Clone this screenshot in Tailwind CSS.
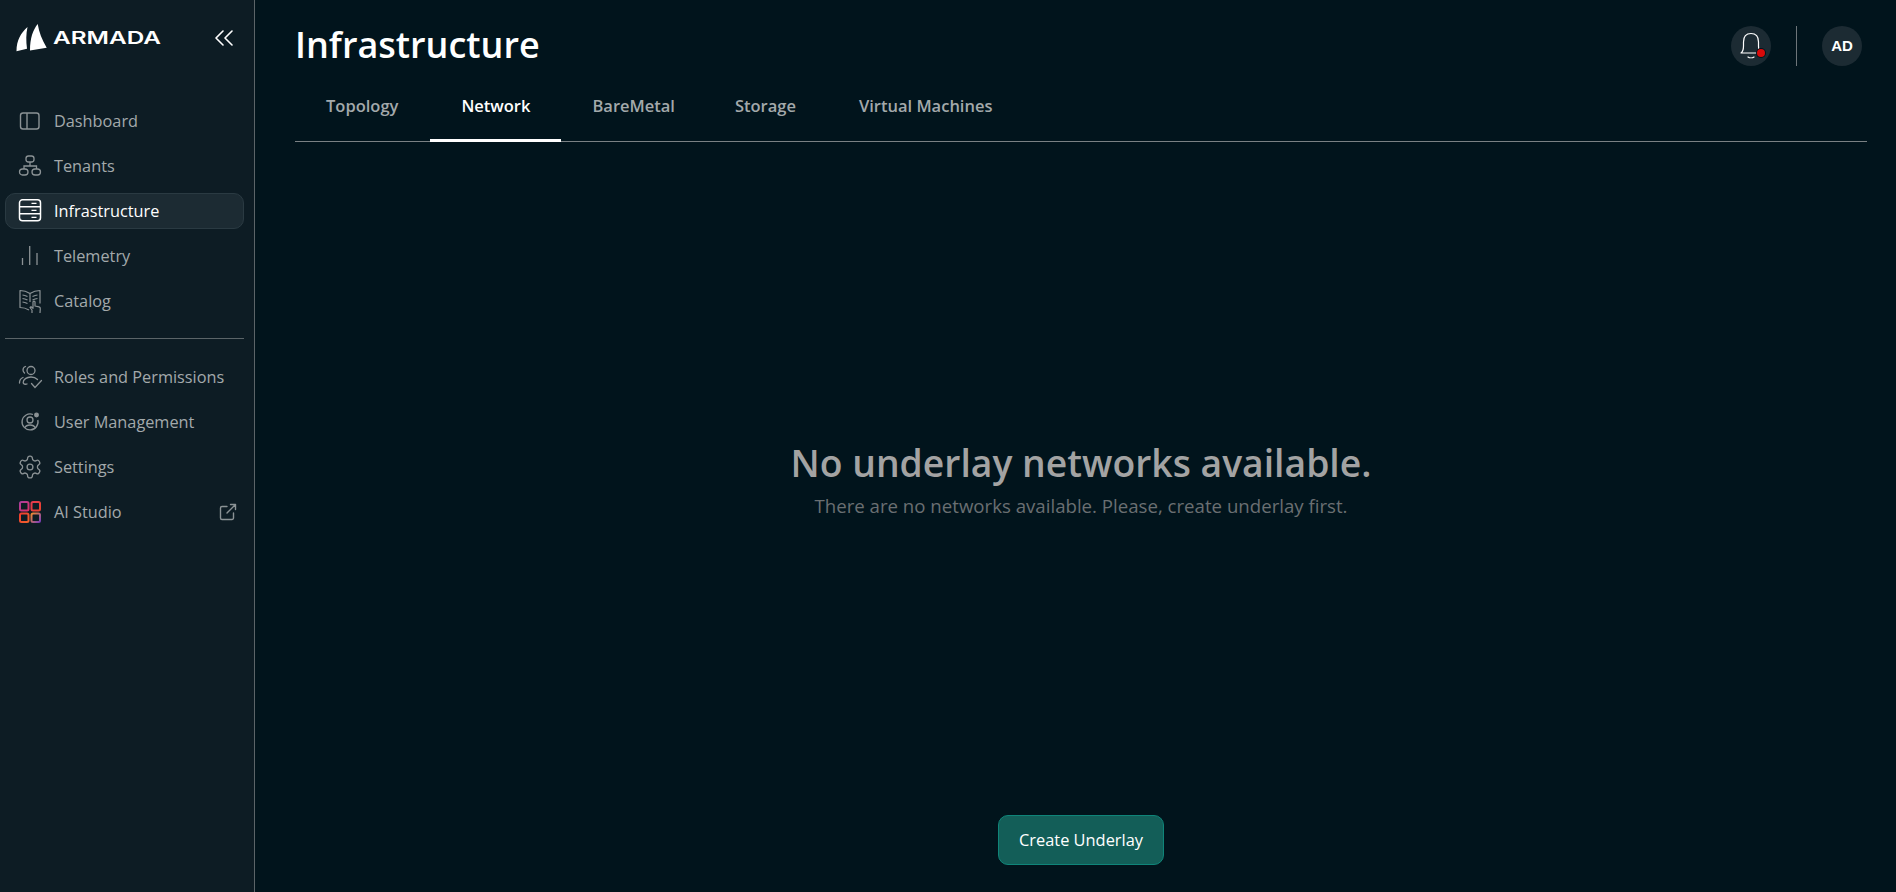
<!DOCTYPE html>
<html lang="en">
<head>
  <meta charset="UTF-8" />
  <title>Infrastructure</title>
  <script src="https://cdn.jsdelivr.net/npm/@tailwindcss/browser@4"></script>
</head>
<body class="bg-[#01141c] font-['Open_Sans',sans-serif] overflow-hidden">
  <div class="flex h-[892px]">
    <!-- sidebar -->
    <aside class="w-[255px] shrink-0 bg-[#0d1c24] border-r border-[#5b6468] pl-[5px] pr-[10px]">
      <div class="flex items-center justify-between h-[76px] pl-[11px] pr-[11px]">
        <div class="flex items-center gap-[6px]">
          <svg width="31" height="28" viewBox="0 0 31 28" fill="#fff">
            <path d="M11.500 3C5 9 .5 16 .5 27.200L11 24.700C10 17 10 10 11.500 3Z"/>
            <path d="M21.700 0C17 6 14 14 14 26.500L30.700 23.700C26 16 23 8 21.700 0Z"/>
          </svg>
          <span class="inline-block origin-left scale-x-[1.43] text-[17px] leading-none font-semibold text-white font-['Inter',sans-serif]">ARMADA</span>
        </div>
        <svg width="18" height="16" viewBox="0 0 18 16" fill="none" stroke="#fff" stroke-width="1.6" stroke-linecap="round" stroke-linejoin="round"><path d="M8 1 1 8l7 7"/><path d="M17 1l-7 7 7 7"/></svg>
      </div>

      <nav class="mt-[28px] flex flex-col gap-[11px] text-[#a3a9ab] text-[16.3px]">
        <a class="flex items-center gap-[11px] h-[34px] pl-[11px] border border-transparent">
          <svg width="26" height="26" viewBox="0 0 26 26" fill="none" stroke="#8b9295" stroke-width="1.4"><rect x="3.500" y="5" width="18.500" height="16" rx="2.500"/><path d="M10 5v16"/></svg>
          Dashboard
        </a>
        <a class="flex items-center gap-[11px] h-[34px] pl-[11px] border border-transparent">
          <svg width="26" height="26" viewBox="0 0 26 26" fill="none" stroke="#8b9295" stroke-width="1.3"><rect x="9" y="3" width="8" height="6" rx="2.500"/><rect x="2.500" y="16" width="8.500" height="6" rx="3"/><rect x="15" y="16" width="8.500" height="6" rx="3"/><path d="M13 9v4M7 16v-3h12.500v3"/></svg>
          Tenants
        </a>
        <a class="flex items-center gap-[11px] h-[36px] pl-[11px] -my-[1px] rounded-[10px] bg-[#1c2b33] border border-[#2a3a42] text-white">
          <svg width="26" height="26" viewBox="0 0 26 26" fill="none" stroke="#fff" stroke-width="1.5"><rect x="2.500" y="1.800" width="21" height="21" rx="3"/><path d="M2.500 8.700h21M2.500 15.700h21"/><path d="M14.500 5.300h5M14.500 12.300h5M14.500 19.300h5" stroke-width="1.200"/></svg>
          Infrastructure
        </a>
        <a class="flex items-center gap-[11px] h-[34px] pl-[11px] border border-transparent">
          <svg width="26" height="26" viewBox="0 0 26 26" fill="none" stroke="#8b9295" stroke-width="1.3"><path d="M5.500 22v-7M12.700 22V3M20 22V10"/></svg>
          Telemetry
        </a>
        <a class="flex items-center gap-[11px] h-[34px] pl-[11px] border border-transparent">
          <svg width="26" height="26" viewBox="0 0 26 26" fill="none" stroke="#8b9295" stroke-width="1.2" stroke-linejoin="round"><path d="M13 5.500C10 3.500 6.500 2.500 3 2.500v17c3 0 6 .7 9 2.500M13 5.500c3-2 6.500-3 10-3v13"/><path d="M13 5.500V14"/><path d="M5.500 7c1.800.2 3.200.7 5 1.500M5.500 10.500c1.800.2 3.200.7 5 1.500M5.500 14c1.800.2 3.200.7 5 1.500M15.500 8.500c1.800-.8 3.200-1.300 5-1.500M15.500 12c1.800-.8 3.200-1.300 5-1.500"/><path d="M15 25v-3l-2-2.500 1-.8 2 1.600v-6.300c0-1.300 2-1.300 2 0v4l4 .8c1 .2 1.400 1 1.300 2l-.3 4.200"/></svg>
          Catalog
        </a>
      </nav>

      <div class="h-px bg-[#5b6468] mt-[20px]"></div>

      <nav class="mt-[21px] flex flex-col gap-[11px] text-[#a3a9ab] text-[16.3px]">
        <a class="flex items-center gap-[11px] h-[34px] pl-[11px] border border-transparent whitespace-nowrap">
          <svg width="26" height="26" viewBox="0 0 26 26" fill="none" stroke="#8b9295" stroke-width="1.3" stroke-linecap="round"><circle cx="14" cy="6.500" r="4"/><path d="M8.500 2.500C6.800 3 6 4.500 6 6c0 1.300.7 2.300 1.500 3"/><path d="M2.500 19c0-2.500 1-4.500 3.500-5.500M10 20c-1.500.5-3.800.2-3.800-1.500 0-3 3.300-5.500 7.800-5.500 3 0 5 1 6.500 2.500"/><path d="M14.500 19.500l3.500 4 6.500-7"/></svg>
          Roles and Permissions
        </a>
        <a class="flex items-center gap-[11px] h-[34px] pl-[11px] border border-transparent">
          <svg width="26" height="26" viewBox="0 0 26 26" fill="none" stroke="#8b9295" stroke-width="1.3"><path d="M16 5.500A8 8 0 1 0 20.800 11"/><circle cx="13" cy="11" r="3"/><path d="M7.500 19c1-2 3-3 5.500-3s4.500 1 5.500 3"/><circle cx="19.500" cy="6" r="1.800" fill="#8b9295"/></svg>
          User Management
        </a>
        <a class="flex items-center gap-[11px] h-[34px] pl-[11px] border border-transparent">
          <svg width="26" height="26" viewBox="0 0 24 24" fill="none" stroke="#8b9295" stroke-width="1.200" stroke-linejoin="round"><path d="M12.220 2h-.44a2 2 0 0 0-2 2v.18a2 2 0 0 1-1 1.730l-.43.25a2 2 0 0 1-2 0l-.15-.08a2 2 0 0 0-2.730.730l-.22.380a2 2 0 0 0 .730 2.730l.15.1a2 2 0 0 1 1 1.720v.51a2 2 0 0 1-1 1.740l-.15.09a2 2 0 0 0-.730 2.730l.22.380a2 2 0 0 0 2.730.730l.15-.08a2 2 0 0 1 2 0l.43.25a2 2 0 0 1 1 1.730V20a2 2 0 0 0 2 2h.44a2 2 0 0 0 2-2v-.18a2 2 0 0 1 1-1.730l.43-.25a2 2 0 0 1 2 0l.15.08a2 2 0 0 0 2.730-.730l.22-.39a2 2 0 0 0-.730-2.730l-.15-.08a2 2 0 0 1-1-1.740v-.5a2 2 0 0 1 1-1.740l.15-.09a2 2 0 0 0 .730-2.730l-.22-.38a2 2 0 0 0-2.730-.730l-.15.08a2 2 0 0 1-2 0l-.43-.25a2 2 0 0 1-1-1.730V4a2 2 0 0 0-2-2z"/><circle cx="12" cy="12" r="2.700"/></svg>
          Settings
        </a>
        <a class="flex items-center h-[34px] pl-[11px] pr-[5px] border border-transparent justify-between">
          <span class="flex items-center gap-[11px]">
            <svg width="26" height="26" viewBox="0 0 26 26" fill="none" stroke-width="2">
              <defs>
                <linearGradient id="g1" x1="0" y1="0" x2="1" y2="1"><stop offset="0" stop-color="#a83f9b"/><stop offset="1" stop-color="#e0306a"/></linearGradient>
                <linearGradient id="g2" x1="0" y1="0" x2="1" y2="1"><stop offset="0" stop-color="#e53a4f"/><stop offset="1" stop-color="#e8432f"/></linearGradient>
                <linearGradient id="g3" x1="0" y1="0" x2="1" y2="1"><stop offset="0" stop-color="#f03c2e"/><stop offset="1" stop-color="#f0602c"/></linearGradient>
                <linearGradient id="g4" x1="0" y1="0" x2="1" y2="1"><stop offset="0" stop-color="#f08a30"/><stop offset="1" stop-color="#7a3db8"/></linearGradient>
              </defs>
              <rect x="3" y="3" width="8.500" height="8.500" rx="1.500" stroke="url(#g1)"/>
              <rect x="14.500" y="3" width="8.500" height="8.500" rx="1.500" stroke="url(#g2)"/>
              <rect x="3" y="14.500" width="8.500" height="8.500" rx="1.500" stroke="url(#g3)"/>
              <rect x="14.500" y="14.500" width="8.500" height="8.500" rx="1.500" stroke="url(#g4)"/>
            </svg>
            AI Studio
          </span>
          <svg width="20" height="20" viewBox="0 0 20 20" fill="none" stroke="#8b9295" stroke-width="1.400" stroke-linecap="round" stroke-linejoin="round"><path d="M15.500 11v5a1.500 1.500 0 0 1-1.500 1.500H4A1.500 1.500 0 0 1 2.500 16V6A1.500 1.500 0 0 1 4 4.500h5"/><path d="M9 11 17.500 2.500M12.500 2.500h5v5"/></svg>
        </a>
      </nav>
    </aside>

    <!-- main -->
    <main class="flex-1 flex flex-col pl-[40px] pr-[29px]">
      <header class="flex items-start justify-between h-[76px] pr-[5px]">
        <h1 class="text-[36px] leading-[48px] mt-[21px] font-semibold text-white">Infrastructure</h1>
        <div class="flex items-center mt-[26px]">
          <div class="relative w-[40px] h-[40px] rounded-full bg-[#1c2b33] flex items-center justify-center">
            <svg width="22" height="28" viewBox="0 0 22 28" fill="none" stroke="#fff" stroke-width="1.200" stroke-linecap="round" stroke-linejoin="round"><path d="M1 21h20c-2-1.500-2.500-3-2.500-7v-4C18.500 4.500 16 1.500 11 1.500S3.500 4.500 3.500 10v4c0 4-.5 5.500-2.500 7Z"/><path d="M8 25c1.500 1 4.500 1 6 0"/></svg>
            <span class="absolute right-[6px] bottom-[9px] w-[8px] h-[8px] rounded-full bg-[#d80a0a] ring-1 ring-[#01141c]"></span>
          </div>
          <div class="w-px h-[40px] bg-[#6d7579] mx-[25px]"></div>
          <div class="w-[40px] h-[40px] rounded-full bg-[#1c2b33] flex items-center justify-center text-white text-[15px] font-bold font-['Liberation_Sans',sans-serif]">AD</div>
        </div>
      </header>

      <div class="flex h-[66px] border-b border-[#7a8184] text-[16.5px] font-semibold text-[#a3a9ab]">
        <a class="pl-[31px] pr-[32px] pt-[18px] h-[66px]">Topology</a>
        <a class="px-[31px] pt-[18px] h-[66px] text-white border-b-[3px] border-white">Network</a>
        <a class="pl-[31px] pr-[29px] pt-[18px] h-[66px]">BareMetal</a>
        <a class="pl-[31px] pr-[32px] pt-[18px] h-[66px]">Storage</a>
        <a class="px-[31px] pt-[18px] h-[66px]">Virtual Machines</a>
      </div>

      <section class="flex-1 flex flex-col items-center">
        <h2 class="mt-[295px] text-[37.3px] leading-[52px] font-semibold text-[#a3a3a3]">No underlay networks available.</h2>
        <p class="mt-[2px] text-[18.65px] leading-[30px] text-[#6a6f72]">There are no networks available. Please, create underlay first.</p>
        <button class="mt-auto mb-[27px] w-[166px] h-[50px] rounded-[10px] bg-[#135e58] border border-[#0f8579] text-white text-[16.4px]">Create Underlay</button>
      </section>
    </main>
  </div>
</body>
</html>
